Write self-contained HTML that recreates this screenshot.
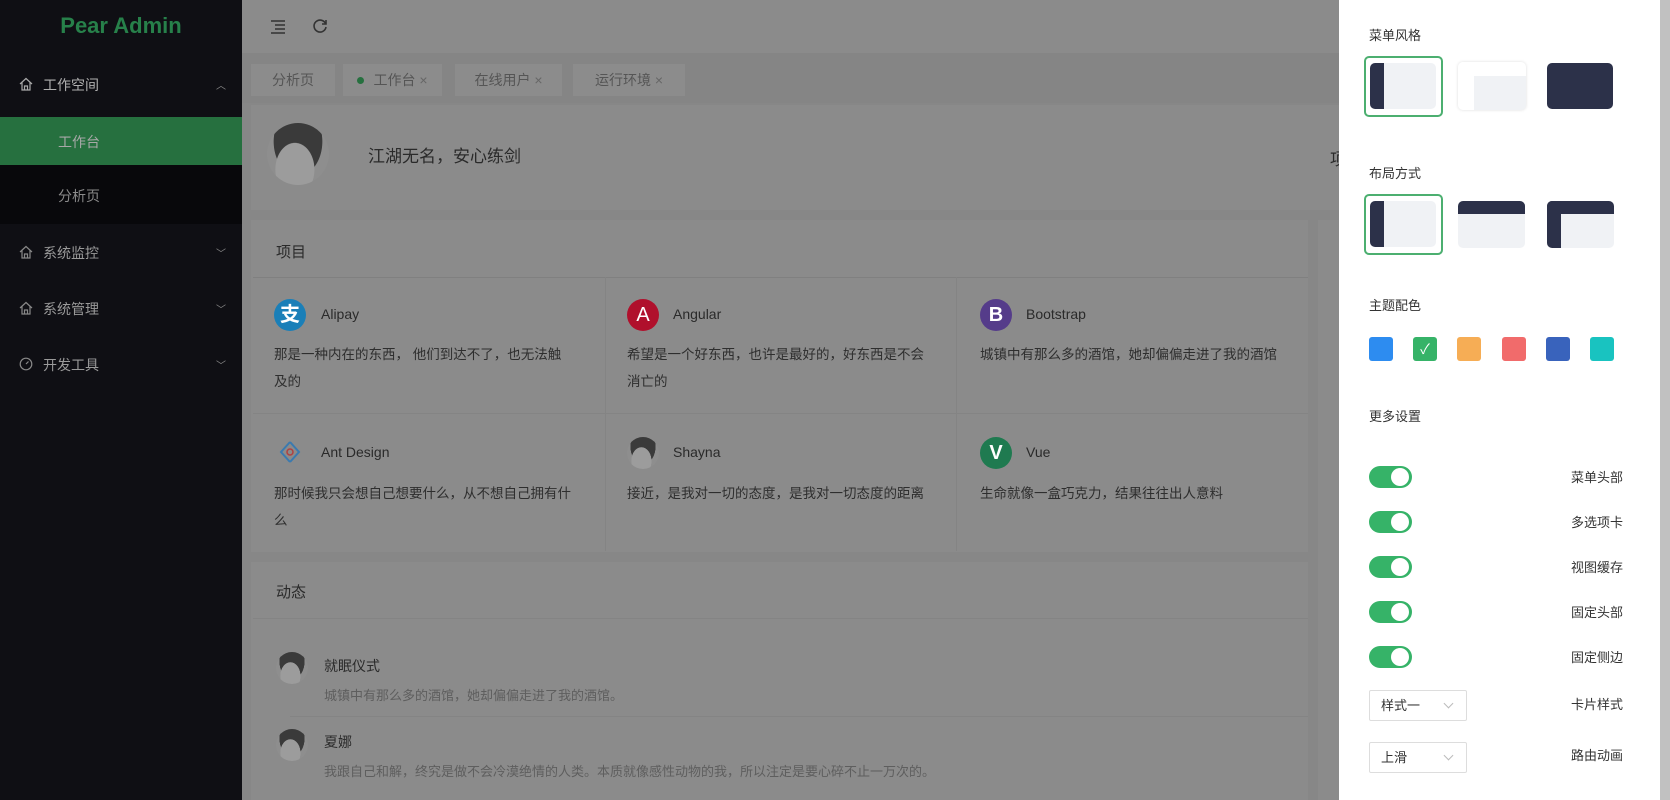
<!DOCTYPE html>
<html><head><meta charset="utf-8">
<style>
*{margin:0;padding:0;box-sizing:border-box}
body{width:1670px;height:800px;overflow:hidden;background:#878787;font-family:"Liberation Sans","Noto Sans CJK SC",sans-serif;position:relative}
.a{position:absolute}
.side{left:0;top:0;width:242px;height:800px;background:#0f0f14}
.logo{left:0;top:13px;width:242px;text-align:center;color:#27804a;font-size:22px;font-weight:bold}
.mi{left:43px;color:#9a9a9a;font-size:14px}
.ic{left:19px;width:14px;height:14px}
.arr{left:216px;color:#8a8a8a;font-size:10px}
.hd{left:242px;top:0;width:1100px;height:53px;background:#8b8b8b}
.tabbar{left:242px;top:53px;width:1100px;height:50px;background:#858585}
.tab{top:64px;height:32px;background:#8c8c8c;color:#555;font-size:14px;line-height:32px;text-align:center}
.card{background:#8b8b8b}
.t{color:#2a2a2a;font-size:14px}
.d{color:#2e2e2e;font-size:13.5px;line-height:27px}
.circ{width:32px;height:32px;border-radius:50%;color:#fff;text-align:center;line-height:32px;font-size:20px}
.drawer{left:1339px;top:0;width:321px;height:800px;background:#fff}
.sb{left:1660px;top:0;width:10px;height:800px;background:#c1c1c1}
.lab{left:1369px;color:#333;font-size:13px}
.box{width:79px;height:60px;border-radius:5px;overflow:hidden}
.sw{width:24px;height:24px;border-radius:3px;top:337px}
.tg{left:1369px;width:43px;height:22px;border-radius:11px;background:#36b368}
.tg:after{content:"";position:absolute;right:3px;top:2px;width:18px;height:18px;border-radius:50%;background:#fff}
.rl{left:1543px;width:80px;text-align:right;color:#333;font-size:13px}
.sel{left:1369px;width:98px;height:31px;border:1px solid #ddd;border-radius:2px;font-size:13px;color:#333;line-height:29px;padding-left:11px}
.sel:after{content:"";position:absolute;right:14px;top:9px;width:6px;height:6px;border-right:1px solid #bbb;border-bottom:1px solid #bbb;transform:rotate(45deg)}
.av{border-radius:50%;background:radial-gradient(ellipse at 45% 75%,#9c9c9c 0 40%,transparent 41%),radial-gradient(ellipse at 50% 30%,#3a3a3a 0 55%,#8e8e8e 56%)}
</style></head><body>
<div class="a side"></div>
<div class="a logo">Pear Admin</div>
<svg class="a ic" style="top:77px" viewBox="0 0 14 14"><path d="M1 7L7 1.5 13 7M3 5.5V13h8V5.5M5.5 13V9h3v4" fill="none" stroke="#aaa" stroke-width="1.2"/></svg>
<div class="a mi" style="top:75px;color:#b0b0b0">工作空间</div>
<div class="a arr" style="top:77px">︿</div>
<div class="a" style="left:0;top:117px;width:242px;height:48px;background:#26703f"></div>
<div class="a" style="left:0;top:165px;width:242px;height:59px;background:#08080b"></div>
<div class="a mi" style="left:58px;top:132px;color:#a8a8a8">工作台</div>
<div class="a mi" style="left:58px;top:186px;color:#8a8a8a">分析页</div>
<svg class="a ic" style="top:245px" viewBox="0 0 14 14"><path d="M1 7L7 1.5 13 7M3 5.5V13h8V5.5M5.5 13V9h3v4" fill="none" stroke="#888" stroke-width="1.2"/></svg>
<div class="a mi" style="top:243px">系统监控</div><div class="a arr" style="top:245px">﹀</div>
<svg class="a ic" style="top:301px" viewBox="0 0 14 14"><path d="M1 7L7 1.5 13 7M3 5.5V13h8V5.5M5.5 13V9h3v4" fill="none" stroke="#888" stroke-width="1.2"/></svg>
<div class="a mi" style="top:299px">系统管理</div><div class="a arr" style="top:301px">﹀</div>
<svg class="a ic" style="top:357px" viewBox="0 0 14 14"><circle cx="7" cy="7" r="5.8" fill="none" stroke="#888" stroke-width="1.2"/><path d="M7 7L9.5 4.5" stroke="#888" stroke-width="1.2"/></svg>
<div class="a mi" style="top:355px">开发工具</div><div class="a arr" style="top:357px">﹀</div>

<div class="a hd"></div>
<svg class="a" style="left:270px;top:19px" width="16" height="15" viewBox="0 0 16 15"><path d="M1 2h14M5 6h10M5 10h10M1 14h14" stroke="#333" stroke-width="1.5"/></svg>
<svg class="a" style="left:312px;top:18px" width="16" height="16" viewBox="0 0 16 16"><path d="M13.5 5.5A6 6 0 1 0 14 9" fill="none" stroke="#333" stroke-width="1.6"/><path d="M14 2v4h-4" fill="none" stroke="#333" stroke-width="1.6"/></svg>
<div class="a tabbar"></div>
<div class="a tab" style="left:251px;width:84px">分析页</div>
<div class="a tab" style="left:343px;width:99px"><span style="display:inline-block;width:7px;height:7px;border-radius:50%;background:#26703f;margin-right:9px;vertical-align:1px"></span>工作台 <span style="color:#666">×</span></div>
<div class="a tab" style="left:455px;width:107px">在线用户 <span style="color:#666">×</span></div>
<div class="a tab" style="left:573px;width:112px">运行环境 <span style="color:#666">×</span></div>

<div class="a card" style="left:251px;top:105px;width:1100px;height:105px"></div>
<div class="a av" style="left:267px;top:123px;width:62px;height:62px"></div>
<div class="a" style="left:368px;top:142px;font-size:17px;color:#2a2a2a">江湖无名，安心练剑</div>
<div class="a" style="left:1330px;top:145px;font-size:17px;color:#2a2a2a">项</div>

<div class="a card" style="left:251px;top:220px;width:1057px;height:332px"></div>
<div class="a card" style="left:1318px;top:220px;width:30px;height:580px"></div>
<div class="a t" style="left:276px;top:241px;font-size:15px">项目</div>
<div class="a" style="left:253px;top:277px;width:1055px;height:1px;background:#808080"></div>
<div class="a" style="left:253px;top:413px;width:1055px;height:1px;background:#848484"></div>
<div class="a" style="left:605px;top:277px;width:1px;height:274px;background:#848484"></div>
<div class="a" style="left:956px;top:277px;width:1px;height:274px;background:#848484"></div>

<div class="a circ" style="left:274px;top:299px;background:#1a7fb8;font-weight:bold">支</div>
<div class="a t" style="left:321px;top:306px">Alipay</div>
<div class="a d" style="left:274px;top:341px;width:300px">那是一种内在的东西， 他们到达不了，也无法触及的</div>
<div class="a circ" style="left:627px;top:299px;background:#b0102c">A</div>
<div class="a t" style="left:673px;top:306px">Angular</div>
<div class="a d" style="left:627px;top:341px;width:300px">希望是一个好东西，也许是最好的，好东西是不会消亡的</div>
<div class="a circ" style="left:980px;top:299px;background:#553c8a;font-weight:bold">B</div>
<div class="a t" style="left:1026px;top:306px">Bootstrap</div>
<div class="a d" style="left:980px;top:341px;width:320px">城镇中有那么多的酒馆，她却偏偏走进了我的酒馆</div>

<svg class="a" style="left:276px;top:438px" width="28" height="28" viewBox="0 0 28 28"><path d="M14 4L5 14l9 10M14 4l9 10-9 10" fill="none" stroke="#3a7ab0" stroke-width="2"/><circle cx="14" cy="14" r="3" fill="none" stroke="#b04040" stroke-width="1.5"/></svg>
<div class="a t" style="left:321px;top:444px">Ant Design</div>
<div class="a d" style="left:274px;top:480px;width:300px">那时候我只会想自己想要什么，从不想自己拥有什么</div>
<div class="a av" style="left:627px;top:437px;width:32px;height:32px"></div>
<div class="a t" style="left:673px;top:444px">Shayna</div>
<div class="a d" style="left:627px;top:480px;width:330px">接近，是我对一切的态度，是我对一切态度的距离</div>
<div class="a circ" style="left:980px;top:437px;background:#1f7a50;font-weight:bold">V</div>
<div class="a t" style="left:1026px;top:444px">Vue</div>
<div class="a d" style="left:980px;top:480px;width:320px">生命就像一盒巧克力，结果往往出人意料</div>

<div class="a card" style="left:251px;top:562px;width:1057px;height:238px"></div>
<div class="a t" style="left:276px;top:581px;font-size:15px">动态</div>
<div class="a" style="left:253px;top:618px;width:1055px;height:1px;background:#848484"></div>
<div class="a av" style="left:276px;top:652px;width:32px;height:32px"></div>
<div class="a t" style="left:324px;top:656px">就眠仪式</div>
<div class="a" style="left:324px;top:685px;font-size:13px;color:#5e5e5e">城镇中有那么多的酒馆，她却偏偏走进了我的酒馆。</div>
<div class="a" style="left:290px;top:716px;width:1018px;height:1px;background:#848484"></div>
<div class="a av" style="left:276px;top:729px;width:32px;height:32px"></div>
<div class="a t" style="left:324px;top:732px">夏娜</div>
<div class="a" style="left:324px;top:761px;font-size:13px;color:#5e5e5e">我跟自己和解，终究是做不会冷漠绝情的人类。本质就像感性动物的我，所以注定是要心碎不止一万次的。</div>

<div class="a drawer"></div>
<div class="a sb"></div>
<div class="a lab" style="top:25px">菜单风格</div>
<div class="a" style="left:1364px;top:56px;width:79px;height:61px;border:2px solid #4caf70;border-radius:5px"></div>
<div class="a box" style="left:1370px;top:63px;width:66px;height:46px;background:#f0f2f5"><div style="width:14px;height:100%;background:#2c3149"></div></div>
<div class="a box" style="left:1458px;top:62px;width:68px;height:48px;background:#f0f2f5;box-shadow:0 0 3px #ddd"><div style="position:absolute;left:0;top:0;width:100%;height:14px;background:#fff"></div><div style="position:absolute;left:0;top:0;width:16px;height:100%;background:#fff"></div></div>
<div class="a box" style="left:1547px;top:63px;width:66px;height:46px;background:#2c3149"></div>
<div class="a lab" style="top:163px">布局方式</div>
<div class="a" style="left:1364px;top:194px;width:79px;height:61px;border:2px solid #4caf70;border-radius:5px"></div>
<div class="a box" style="left:1370px;top:201px;width:66px;height:46px;background:#f0f2f5"><div style="width:14px;height:100%;background:#2c3149"></div></div>
<div class="a box" style="left:1458px;top:201px;width:67px;height:47px;background:#f0f2f5"><div style="width:100%;height:13px;background:#2c3149"></div></div>
<div class="a box" style="left:1547px;top:201px;width:67px;height:47px;background:#f0f2f5"><div style="position:absolute;width:100%;height:13px;background:#2c3149"></div><div style="position:absolute;width:14px;height:100%;background:#2c3149"></div></div>
<div class="a lab" style="top:295px">主题配色</div>
<div class="a sw" style="left:1369px;background:#2d8cf0"></div>
<div class="a sw" style="left:1413px;background:#36b368;color:#fff;font-size:14px;text-align:center;line-height:24px">✓</div>
<div class="a sw" style="left:1457px;background:#f6ad55"></div>
<div class="a sw" style="left:1502px;background:#f16b6b"></div>
<div class="a sw" style="left:1546px;background:#3963bc"></div>
<div class="a sw" style="left:1590px;background:#19c3c0"></div>
<div class="a lab" style="top:406px">更多设置</div>
<div class="a tg" style="top:466px"></div><div class="a rl" style="top:467px">菜单头部</div>
<div class="a tg" style="top:511px"></div><div class="a rl" style="top:512px">多选项卡</div>
<div class="a tg" style="top:556px"></div><div class="a rl" style="top:557px">视图缓存</div>
<div class="a tg" style="top:601px"></div><div class="a rl" style="top:602px">固定头部</div>
<div class="a tg" style="top:646px"></div><div class="a rl" style="top:647px">固定侧边</div>
<div class="a sel" style="top:690px">样式一</div><div class="a rl" style="top:694px">卡片样式</div>
<div class="a sel" style="top:742px">上滑</div><div class="a rl" style="top:745px">路由动画</div>
</body></html>
